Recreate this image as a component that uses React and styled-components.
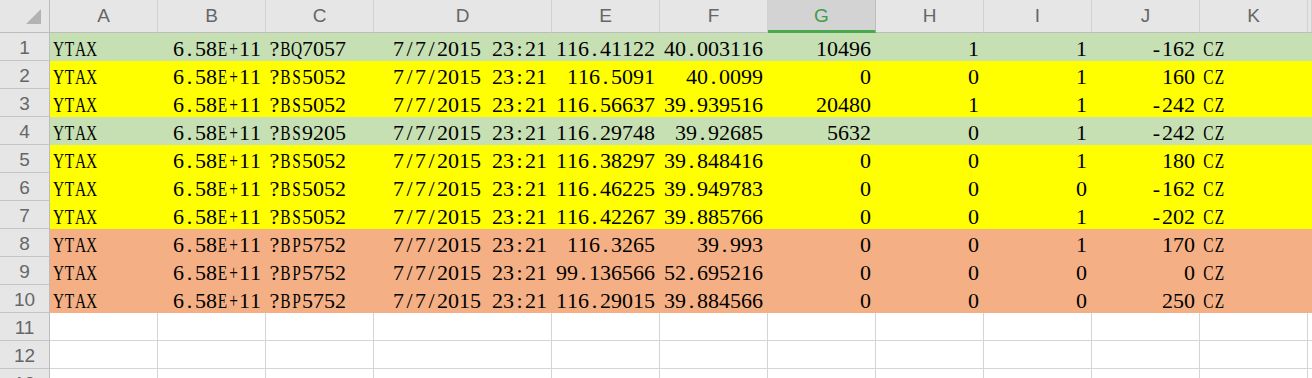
import React from 'react'
import styled, { createGlobalStyle } from 'styled-components'

const GlobalStyle = createGlobalStyle`
  html, body {
    margin: 0;
    padding: 0;
    background: #ffffff;
    overflow: hidden;
  }
`

const COLS = '50px repeat(3, 108px) 178px repeat(7, 108px) 1fr'

const fills = {
  green: '#c6e0b4',
  yellow: '#ffff00',
  orange: '#f4b084',
}

const Sheet = styled.div`
  width: 1312px;
  height: 378px;
  overflow: hidden;
  background: #ffffff;
`

const HeadRow = styled.div`
  display: grid;
  grid-template-columns: ${COLS};
  height: 33px;
  background: #e6e6e6;
`

const Corner = styled.div`
  position: relative;
  border-right: 1px solid #bcbcbc;
  border-bottom: 1px solid #bcbcbc;
  svg {
    position: absolute;
    left: 25px;
    top: 8px;
  }
`

const ColHead = styled.div`
  display: flex;
  align-items: center;
  justify-content: center;
  box-sizing: border-box;
  padding-bottom: 1px;
  font-family: 'Liberation Sans', Arial, sans-serif;
  font-size: 19px;
  color: ${(p) => (p.$active ? '#3f9c46' : '#666666')};
  background: ${(p) => (p.$active ? '#d3d3d3' : '#e6e6e6')};
  border-right: 1px solid ${(p) => (p.$active ? '#bdbdbd' : '#d2d2d2')};
  border-bottom: ${(p) => (p.$active ? '3px solid #4aa84f' : '1px solid #bcbcbc')};
  ${(p) => p.$active && 'padding-top: 2px;'}
`

const Row = styled.div`
  display: grid;
  grid-template-columns: ${COLS};
  height: 28px;
  background: ${(p) => (p.$fill ? fills[p.$fill] : '#ffffff')};
`

const RowHead = styled.div`
  display: flex;
  align-items: center;
  justify-content: center;
  box-sizing: border-box;
  padding-top: 3px;
  background: #e6e6e6;
  font-family: 'Liberation Sans', Arial, sans-serif;
  font-size: 19px;
  color: #666666;
  border-right: 1px solid #bcbcbc;
  border-bottom: 1px solid #c4c4c4;
`

const Cell = styled.div`
  display: flex;
  align-items: flex-end;
  justify-content: ${(p) => (p.$right ? 'flex-end' : 'flex-start')};
  box-sizing: border-box;
  padding: 0 4px 0 3px;
  overflow: visible;
  white-space: nowrap;
  border-right: 1px solid ${(p) => (p.$filled ? 'transparent' : '#d4d4d4')};
  border-bottom: 1px solid ${(p) => (p.$filled ? 'transparent' : '#d4d4d4')};
`

// half-width serif text: every character sits in an 11px slot, like SimSun
const Val = styled.span`
  display: inline-flex;
  font-family: 'Liberation Serif', 'Times New Roman', serif;
  font-size: 22px;
  line-height: 22px;
  color: #000000;
`

const Glyph = styled.span`
  display: inline-flex;
  justify-content: center;
  width: 11px;
  flex: none;
  white-space: pre;
  transform: ${(p) => (p.$upper ? 'scaleX(0.7)' : 'none')};
`

const letters = ['A', 'B', 'C', 'D', 'E', 'F', 'G', 'H', 'I', 'J', 'K', '']

// which columns hold text (left aligned)
const leftCols = [0, 2, 10]

const rows = [
  ['green', '?BQ7057', '116.41122', '40.003116', '10496', '1', '1', '-162'],
  ['yellow', '?BS5052', '116.5091', '40.0099', '0', '0', '1', '160'],
  ['yellow', '?BS5052', '116.56637', '39.939516', '20480', '1', '1', '-242'],
  ['green', '?BS9205', '116.29748', '39.92685', '5632', '0', '1', '-242'],
  ['yellow', '?BS5052', '116.38297', '39.848416', '0', '0', '1', '180'],
  ['yellow', '?BS5052', '116.46225', '39.949783', '0', '0', '0', '-162'],
  ['yellow', '?BS5052', '116.42267', '39.885766', '0', '0', '1', '-202'],
  ['orange', '?BP5752', '116.3265', '39.993', '0', '0', '1', '170'],
  ['orange', '?BP5752', '99.136566', '52.695216', '0', '0', '0', '0'],
  ['orange', '?BP5752', '116.29015', '39.884566', '0', '0', '0', '250'],
]

const toCells = (r) => {
  const [, code, lon, lat, g, h, i, j] = r
  return ['YTAX', '6.58E+11', code, '7/7/2015 23:21', lon, lat, g, h, i, j, 'CZ', '']
}

const Text = ({ children }) => (
  <Val>
    {children.split('').map((ch, k) => (
      <Glyph key={k} $upper={/[A-Z+]/.test(ch)}>
        {ch}
      </Glyph>
    ))}
  </Val>
)

const CornerCell = () => (
  <Corner>
    <svg width='17' height='17' viewBox='0 0 17 17'>
      <polygon points='1,16 16,16 16,1' fill='#b3b3b3' />
    </svg>
  </Corner>
)

const App = () => (
  <>
    <GlobalStyle />
    <Sheet>
      <HeadRow>
        <CornerCell />
        {letters.map((l, idx) => (
          <ColHead key={idx} $active={l === 'G'}>
            {l}
          </ColHead>
        ))}
      </HeadRow>
      {rows.map((r, n) => (
        <Row key={n} $fill={r[0]}>
          <RowHead>{n + 1}</RowHead>
          {toCells(r).map((v, c) => (
            <Cell key={c} $filled $right={!leftCols.includes(c)}>
              {v && <Text>{v}</Text>}
            </Cell>
          ))}
        </Row>
      ))}
      {[11, 12, 13].map((n) => (
        <Row key={n}>
          <RowHead>{n}</RowHead>
          {letters.map((l, c) => (
            <Cell key={c} />
          ))}
        </Row>
      ))}
    </Sheet>
  </>
)

export default App
